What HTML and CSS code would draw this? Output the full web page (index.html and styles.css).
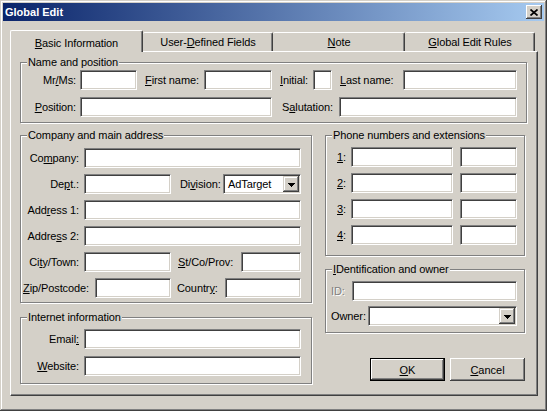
FILE: index.html
```html
<!DOCTYPE html>
<html lang="en">
<head>
    <meta charset="UTF-8">
    <title>Global Edit</title>
    <link rel="stylesheet" href="styles.css">
</head>
<body>
    <div class="window">
        <div class="titlebar">
            <span class="title">Global Edit</span>
            <span class="close">
                <svg width="8" height="7" viewBox="0 0 8 7"><path d="M0.5 0.5L7.5 6.5M7.5 0.5L0.5 6.5" stroke="#000" stroke-width="1.7"/></svg>
            </span>
        </div>
        <div class="client">
            <div class="tabs">
                <div class="tab active t1"><u>B</u>asic Information</div>
                <div class="tab t2">User-<u>D</u>efined Fields</div>
                <div class="tab t3"><u>N</u>ote</div>
                <div class="tab t4"><u>G</u>lobal Edit Rules</div>
            </div>
            <div class="panel">
                <fieldset class="group name-group">
                    <legend>Name and position</legend>
                    <div class="row">
                        <label class="lbl w59">Mr<u>/</u>Ms:</label>
                        <input type="text" class="tb w57">
                        <label class="mid w67"><u>F</u>irst name:</label>
                        <input type="text" class="tb w68">
                        <label class="mid w41"><u>I</u>nitial:</label>
                        <input type="text" class="tb w19">
                        <label class="mid w71"><u>L</u>ast name:</label>
                        <input type="text" class="tb w114">
                    </div>
                    <div class="row">
                        <label class="lbl w59"><u>P</u>osition:</label>
                        <input type="text" class="tb w192">
                        <label class="mid w67 pl10">S<u>a</u>lutation:</label>
                        <input type="text" class="tb w178">
                    </div>
                </fieldset>

                <div class="columns">
                    <div class="col-left">
                        <fieldset class="group company-group">
                            <legend>Company and main address</legend>
                            <div class="row">
                                <label class="lbl w63">Co<u>m</u>pany:</label>
                                <input type="text" class="tb w217">
                            </div>
                            <div class="row">
                                <label class="lbl w63">De<u>p</u>t.:</label>
                                <input type="text" class="tb w87">
                                <label class="mid w52 pl9">Di<u>v</u>ision:</label>
                                <div class="combo w78">
                                    <span class="combo-text">AdTarget</span>
                                    <span class="drop"><svg width="7" height="4" viewBox="0 0 7 4" shape-rendering="crispEdges"><path d="M0 0H7V1H6V2H5V3H4V4H3V3H2V2H1V1H0Z" fill="#000"/></svg></span>
                                </div>
                            </div>
                            <div class="row">
                                <label class="lbl w63">Add<u>r</u>ess 1:</label>
                                <input type="text" class="tb w217">
                            </div>
                            <div class="row">
                                <label class="lbl w63">Addre<u>s</u>s 2:</label>
                                <input type="text" class="tb w217">
                            </div>
                            <div class="row">
                                <label class="lbl w63">Ci<u>t</u>y/Town:</label>
                                <input type="text" class="tb w87">
                                <label class="mid w70 pl7"><u>S</u>t/Co/Prov:</label>
                                <input type="text" class="tb w60">
                            </div>
                            <div class="row">
                                <label class="lbl w74 pr6"><u>Z</u>ip/Postcode:</label>
                                <input type="text" class="tb w76">
                                <label class="mid w54 pl6">Countr<u>y</u>:</label>
                                <input type="text" class="tb w76">
                            </div>
                        </fieldset>

                        <fieldset class="group internet-group">
                            <legend>Internet information</legend>
                            <div class="row">
                                <label class="lbl w63">Email<u>:</u></label>
                                <input type="text" class="tb w217">
                            </div>
                            <div class="row">
                                <label class="lbl w63"><u>W</u>ebsite:</label>
                                <input type="text" class="tb w217">
                            </div>
                        </fieldset>
                    </div>

                    <div class="col-right">
                        <fieldset class="group phone-group">
                            <legend>Phone numbers and extensions</legend>
                            <div class="row">
                                <label class="num"><u>1</u>:</label>
                                <input type="text" class="tb w102">
                                <input type="text" class="tb w57 ext">
                            </div>
                            <div class="row">
                                <label class="num"><u>2</u>:</label>
                                <input type="text" class="tb w102">
                                <input type="text" class="tb w57 ext">
                            </div>
                            <div class="row">
                                <label class="num"><u>3</u>:</label>
                                <input type="text" class="tb w102">
                                <input type="text" class="tb w57 ext">
                            </div>
                            <div class="row">
                                <label class="num"><u>4</u>:</label>
                                <input type="text" class="tb w102">
                                <input type="text" class="tb w57 ext">
                            </div>
                        </fieldset>

                        <fieldset class="group id-group">
                            <legend><u>I</u>Dentification and owner</legend>
                            <div class="row">
                                <label class="mid w26 pl5 disabled">ID:</label>
                                <input type="text" class="tb w165">
                            </div>
                            <div class="row">
                                <label class="mid w42 pl5">Owner:</label>
                                <div class="combo w149">
                                    <span class="combo-text"></span>
                                    <span class="drop"><svg width="7" height="4" viewBox="0 0 7 4" shape-rendering="crispEdges"><path d="M0 0H7V1H6V2H5V3H4V4H3V3H2V2H1V1H0Z" fill="#000"/></svg></span>
                                </div>
                            </div>
                        </fieldset>

                        <div class="buttons">
                            <button type="button" class="btn default"><u>O</u>K</button>
                            <button type="button" class="btn"><u>C</u>ancel</button>
                        </div>
                    </div>
                </div>
            </div>
        </div>
    </div>
</body>
</html>
```

FILE: styles.css
```css
body {
    margin: 0;
    font-family: "Liberation Sans", Arial, sans-serif;
    font-size: 11px;
    letter-spacing: -0.1px;
    color: #000;
    background-color: #d4d0c8;
}
.window {
    width: 547px;
    height: 411px;
    box-sizing: border-box;
    padding: 3px;
    background-color: #d4d0c8;
    box-shadow: inset -1px -1px #404040, inset 1px 1px #d4d0c8,
                inset -2px -2px #808080, inset 2px 2px #fff;
}
.titlebar {
    height: 18px;
    display: flex;
    align-items: center;
    justify-content: space-between;
    padding: 0 2px 0 2px;
    background: linear-gradient(to right, #0a246a, #a6caf0);
    color: #fff;
    font-weight: bold;
    letter-spacing: 0;
}
.close {
    width: 16px;
    height: 14px;
    display: flex;
    align-items: center;
    justify-content: center;
    background-color: #d4d0c8;
    box-shadow: inset -1px -1px #404040, inset 1px 1px #fff,
                inset -2px -2px #808080, inset 2px 2px #d4d0c8;
}
.client {
    padding: 9px 0 0 7px;
}

/* tabs */
.tabs {
    display: flex;
    align-items: flex-end;
    height: 21px;
    position: relative;
    z-index: 1;
}
.tab {
    box-sizing: border-box;
    height: 19px;
    padding-top: 3px;
    line-height: 13px;
    text-align: center;
    border-top: 1px solid #fff;
    border-left: 1px solid #fff;
    border-right: 1px solid #404040;
    border-radius: 2px 2px 0 0;
    box-shadow: inset -1px 0 #808080;
    background-color: #d4d0c8;
}
.tab.active {
    height: 22px;
    margin-bottom: -1px;
    padding-top: 6px;
}
.t1 { width: 133px; }
.t2 { width: 130px; border-left: none; }
.t3 { width: 132px; border-left: none; }
.t4 { width: 130px; border-left: none; }
.t2, .t3, .t4 { padding-left: 1px; }

.panel {
    width: 528px;
    height: 345px;
    box-sizing: border-box;
    padding: 4px 0 0 9px;
    border-top: 1px solid #fff;
    border-left: 1px solid #fff;
    border-right: 1px solid #404040;
    border-bottom: 1px solid #404040;
    box-shadow: inset -1px -1px #808080;
}

/* group boxes */
.group {
    margin: 0;
    padding: 0;
    min-width: 0;
    border: 1px solid #808080;
    box-shadow: inset 1px 1px #fff, 1px 1px #fff;
}
.group legend {
    margin-left: 6px;
    padding: 0 1px;
    line-height: 13px;
    background-color: #d4d0c8;
}
.name-group {
    width: 505px;
    padding: 1px 0 5px 0;
}
.name-group .row + .row { margin-top: 7px; }

.columns {
    display: flex;
    gap: 13px;
    margin-top: 6px;
}
.col-left { width: 292px; }
.col-right { width: 200px; }

.company-group { padding: 6px 0 4px 0; }
.company-group .row + .row { margin-top: 6px; }
.internet-group {
    margin-top: 8px;
    padding: 5px 0 7px 0;
}
.internet-group .row + .row { margin-top: 7px; }
.phone-group { padding: 5px 0 10px 0; }
.phone-group .row + .row { margin-top: 6px; }
.id-group {
    margin-top: 7px;
    padding: 5px 0 6px 0;
}
.id-group .row + .row { margin-top: 5px; }

/* rows, labels and fields */
.row {
    display: flex;
    align-items: center;
    height: 20px;
}
.lbl, .mid, .num {
    flex: none;
    box-sizing: border-box;
    line-height: 20px;
    white-space: nowrap;
}
.lbl {
    text-align: right;
    padding-right: 5px;
}
.name-group .lbl { padding-right: 4px; }
.mid {
    text-align: left;
    padding-left: 8px;
}
.num {
    width: 25px;
    padding-left: 11px;
}
.disabled {
    color: #808080;
    text-shadow: 1px 1px #fff;
}
.pl5 { padding-left: 5px; }
.pl6 { padding-left: 6px; }
.pl7 { padding-left: 7px; }
.pl9 { padding-left: 9px; }
.pl10 { padding-left: 10px; }
.pr6 { padding-right: 6px; }

.tb, .combo {
    flex: none;
    box-sizing: border-box;
    height: 20px;
    margin: 0;
    padding: 0 3px;
    font: inherit;
    background-color: #fff;
    border: 1px solid;
    border-color: #808080 #fff #fff #808080;
    box-shadow: inset 1px 1px #404040, inset -1px -1px #d4d0c8;
    outline: none;
}
.ext { margin-left: 7px; }
.combo {
    display: flex;
    align-items: center;
    padding: 1px;
}
.combo-text {
    flex: 1;
    padding-left: 3px;
    line-height: 16px;
}
.drop {
    width: 16px;
    height: 16px;
    box-sizing: border-box;
    padding-top: 1px;
    display: flex;
    align-items: center;
    justify-content: center;
    background-color: #d4d0c8;
    box-shadow: inset -1px -1px #404040, inset 1px 1px #d4d0c8,
                inset -2px -2px #808080, inset 2px 2px #fff;
}

.w19 { width: 19px; }
.w26 { width: 26px; }
.w41 { width: 41px; }
.w42 { width: 42px; }
.w52 { width: 52px; }
.w54 { width: 54px; }
.w57 { width: 57px; }
.w59 { width: 59px; }
.w60 { width: 60px; }
.w63 { width: 63px; }
.w67 { width: 67px; }
.w68 { width: 68px; }
.w70 { width: 70px; }
.w71 { width: 71px; }
.w74 { width: 74px; }
.w76 { width: 76px; }
.w78 { width: 78px; }
.w87 { width: 87px; }
.w102 { width: 102px; }
.w114 { width: 114px; }
.w149 { width: 149px; }
.w165 { width: 165px; }
.w178 { width: 178px; }
.w192 { width: 192px; }
.w217 { width: 217px; }

/* buttons */
.buttons {
    display: flex;
    justify-content: flex-end;
    gap: 5px;
    margin-top: 25px;
}
.btn {
    width: 75px;
    height: 23px;
    margin: 0;
    padding: 0;
    font: inherit;
    color: #000;
    border: none;
    background-color: #d4d0c8;
    box-shadow: inset -1px -1px #404040, inset 1px 1px #fff,
                inset -2px -2px #808080, inset 2px 2px #d4d0c8;
}
.btn.default {
    border: 1px solid #000;
}
```
